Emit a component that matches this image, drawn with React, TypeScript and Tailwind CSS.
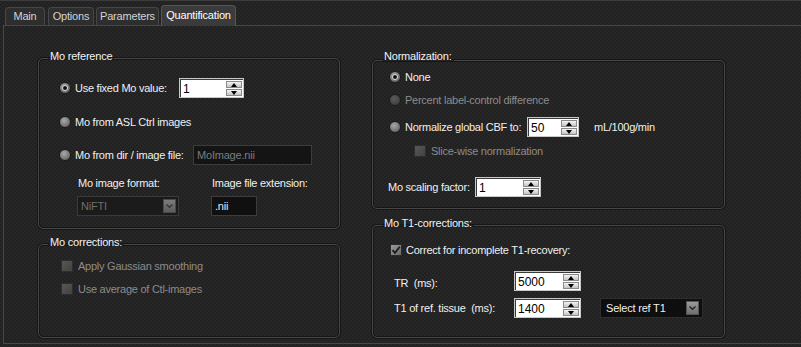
import React from "react";

const font = "font-['Liberation_Sans',Arial,sans-serif]";

function Radio({ checked = false, disabled = false }: { checked?: boolean; disabled?: boolean }) {
  return (
    <span
      className={
        "relative flex h-[12px] w-[12px] shrink-0 items-center justify-center rounded-full border border-[#1c1c1c] " +
        (disabled
          ? "bg-[radial-gradient(circle_at_40%_35%,#5a5a5a,#383838)]"
          : "bg-[radial-gradient(circle_at_40%_35%,#a8a8a8,#555555)]")
      }
    >
      {checked && (
        <span className="h-[6px] w-[6px] rounded-full border border-[#e0e0e0] bg-[#111111]" />
      )}
    </span>
  );
}

function Check({ checked = false, disabled = false }: { checked?: boolean; disabled?: boolean }) {
  return (
    <span
      className={
        "flex h-[12px] w-[12px] shrink-0 items-center justify-center border " +
        (disabled
          ? "border-[#2e2e2e] bg-[linear-gradient(135deg,#575757,#424242)]"
          : "border-[#2a2a2a] bg-[linear-gradient(135deg,#9a9a9a,#6a6a6a)]")
      }
    >
      {checked && (
        <svg width="10" height="10" viewBox="0 0 10 10">
          <path d="M1.5 5.2 L4 7.8 L8.8 1.8" fill="none" stroke="#1a1a1a" strokeWidth="1.8" />
        </svg>
      )}
    </span>
  );
}

function Spin({ value, className }: { value: string; className: string }) {
  return (
    <div className={"flex h-[20px] shrink-0 border border-[#c8c8c8] bg-white " + className}>
      <div className="flex flex-1 items-center border-l border-t border-[#3a3a3a] pl-[2px] text-[12px] leading-none text-black">
        {value}
      </div>
      <div className="flex w-[17px] flex-col border-t border-[#3a3a3a] bg-white py-[1px] pr-[1px]">
        <div className="flex h-[8px] items-center justify-center border border-[#8a8a8a] bg-[linear-gradient(#f4f4f4,#c4c4c4)]">
          <svg width="6" height="4" viewBox="0 0 6 4">
            <polygon points="3,0 6,4 0,4" fill="#000" />
          </svg>
        </div>
        <div className="mt-[1px] flex h-[8px] items-center justify-center border border-[#8a8a8a] bg-[linear-gradient(#f4f4f4,#c4c4c4)]">
          <svg width="6" height="4" viewBox="0 0 6 4">
            <polygon points="0,0 6,0 3,4" fill="#000" />
          </svg>
        </div>
      </div>
    </div>
  );
}

function DropBtn({ light = false }: { light?: boolean }) {
  return (
    <span
      className={
        "flex h-[14px] w-[13px] items-center justify-center border " +
        (light ? "border-[#555] bg-[linear-gradient(#9a9a9a,#6e6e6e)]" : "border-[#4a4a4a] bg-[linear-gradient(#7c7c7c,#5c5c5c)]")
      }
    >
      <svg width="7" height="4" viewBox="0 0 7 4">
        <path d="M0.5 0.5 L3.5 3.3 L6.5 0.5" fill="none" stroke={light ? "#222" : "#333"} strokeWidth="1.3" />
      </svg>
    </span>
  );
}

function Group({
  title,
  className,
  legendClass = "pb-[4px]",
  children,
}: {
  title: string;
  className: string;
  legendClass?: string;
  children: React.ReactNode;
}) {
  return (
    <fieldset
      className={"flex flex-col rounded-[5px] border border-[#464646] shadow-[0_0_0_1px_#161616,inset_0_0_0_1px_#161616] " + className}
    >
      <legend className={"ml-[9px] px-[2px] text-[11px] leading-[14px] tracking-[-0.2px] text-[#f2f2f2] " + legendClass}>
        {title}
      </legend>
      {children}
    </fieldset>
  );
}

export default function App() {
  const label = "text-[11px] leading-[14px] tracking-[-0.25px] text-[#f0f0f0] whitespace-nowrap";
  const dis = "text-[11px] leading-[14px] tracking-[-0.25px] text-[#8c8c8c] whitespace-nowrap";
  return (
    <div
      className={
        "h-[347px] w-[801px] overflow-hidden bg-[#242424] bg-[repeating-conic-gradient(#272727_0_25%,#212121_0_50%)] bg-[length:4px_4px] " +
        font
      }
    >
      {/* tabs */}
      <div className="relative z-10 flex h-[25px] items-end border-t border-[#3c3c3c] pl-[5px] text-[11px] tracking-[-0.2px]">
        <div className="mr-[3px] flex h-[18px] w-[40px] items-center justify-center rounded-t-[4px] border border-b-0 border-[#474747] bg-[#2e2e2e] text-[#d4d4d4]">
          Main
        </div>
        <div className="mr-[2px] flex h-[18px] w-[46px] items-center justify-center rounded-t-[4px] border border-b-0 border-[#474747] bg-[#2e2e2e] text-[#d4d4d4]">
          Options
        </div>
        <div className="mr-[2px] flex h-[18px] w-[63px] items-center justify-center rounded-t-[4px] border border-b-0 border-[#474747] bg-[#2e2e2e] text-[#d4d4d4]">
          Parameters
        </div>
        <div className="-mb-[1px] flex h-[21px] w-[75px] items-center justify-center rounded-t-[4px] border border-b-0 border-[#555555] bg-[#3b3b3b] pb-[1px] text-white">
          Quantification
        </div>
      </div>

      {/* panel */}
      <div className="ml-[3px] flex h-[319px] gap-[32px] border-b border-l border-t border-[#474747] pl-[34px] pt-[23px]">
        {/* left column */}
        <div className="flex w-[302px] flex-col">
          <Group title="Mo reference" className="h-[180px]">
            <div className="mt-[11px] flex h-[20px] items-center pl-[20px]">
              <Radio checked />
              <span className={"ml-[4px] w-[104px] " + label}>Use fixed Mo value:</span>
              <Spin value="1" className="w-[65px]" />
            </div>
            <div className="mt-[14px] flex h-[20px] items-center pl-[20px]">
              <Radio />
              <span className={"ml-[4px] " + label}>Mo from ASL Ctrl images</span>
            </div>
            <div className="mt-[13px] flex h-[20px] items-center pl-[20px]">
              <Radio />
              <span className={"ml-[4px] w-[118px] " + label}>Mo from dir / image file:</span>
              <div className="flex h-[20px] w-[119px] items-center border border-[#3c3c3c] bg-[#141414] pl-[3px] text-[11px] tracking-[-0.2px] text-[#7c7c7c]">
                MoImage.nii
              </div>
            </div>
            <div className="mt-[11px] grid grid-cols-[134px_1fr] pl-[38px]">
              <span className={"ml-[1px] " + label}>Mo image format:</span>
              <span className={"ml-[1px] " + label}>Image file extension:</span>
            </div>
            <div className="mt-[6px] grid grid-cols-[134px_1fr] pl-[38px]">
              <div className="flex h-[20px] w-[102px] items-center justify-between border border-[#3a3a3a] bg-[#1b1b1b] pl-[3px] pr-[2px] text-[11px] tracking-[-0.2px] text-[#6e6e6e]">
                NiFTI
                <DropBtn />
              </div>
              <div className="flex h-[20px] w-[46px] items-center border border-[#3c3c3c] bg-[#101010] pl-[3px] text-[11px] tracking-[-0.2px] text-[#e8e8e8]">
                .nii
              </div>
            </div>
          </Group>

          <Group title="Mo corrections:" className="mt-[6px] h-[103px]">
            <div className="mt-[6px] flex h-[14px] items-center pl-[22px]">
              <Check disabled />
              <span className={"ml-[5px] " + dis}>Apply Gaussian smoothing</span>
            </div>
            <div className="mt-[9px] flex h-[14px] items-center pl-[22px]">
              <Check disabled />
              <span className={"ml-[5px] " + dis}>Use average of Ctl-images</span>
            </div>
          </Group>
        </div>

        {/* right column */}
        <div className="flex w-[353px] flex-col">
          <Group title="Normalization:" className="h-[160px]" legendClass="pb-[8px]">
            <div className="-mt-[4px] flex h-[20px] items-center pl-[16px]">
              <Radio checked />
              <span className={"ml-[4px] " + label}>None</span>
            </div>
            <div className="mt-[3px] flex h-[20px] items-center pl-[16px]">
              <Radio disabled />
              <span className={"ml-[4px] " + dis}>Percent label-control difference</span>
            </div>
            <div className="mt-[7px] flex h-[20px] items-center pl-[16px]">
              <Radio />
              <span className={"ml-[4px] w-[122px] " + label}>Normalize global CBF to:</span>
              <Spin value="50" className="w-[52px]" />
              <span className={"ml-[15px] " + label}>mL/100g/min</span>
            </div>
            <div className="mt-[7px] flex h-[14px] items-center pl-[41px]">
              <Check disabled />
              <span className={"ml-[5px] " + dis}>Slice-wise normalization</span>
            </div>
            <div className="mt-[19px] flex h-[20px] items-center pl-[15px]">
              <span className={"w-[87px] " + label}>Mo scaling factor:</span>
              <Spin value="1" className="w-[66px]" />
            </div>
          </Group>

          <Group title="Mo T1-corrections:" className="mt-[7px] h-[122px]">
            <div className="mt-[9px] flex h-[14px] items-center pl-[17px]">
              <Check checked />
              <span className={"ml-[4px] " + label}>Correct for incomplete T1-recovery:</span>
            </div>
            <div className="mt-[14px] flex h-[20px] items-center pl-[21px]">
              <span className={"w-[120px] pt-[4px] " + label}>TR&nbsp; (ms):</span>
              <Spin value="5000" className="w-[67px]" />
            </div>
            <div className="mt-[7px] flex h-[20px] items-center pl-[21px]">
              <span className={"w-[120px] " + label}>T1 of ref. tissue&nbsp; (ms):</span>
              <Spin value="1400" className="w-[67px]" />
              <div className="ml-[19px] flex h-[20px] w-[103px] items-center justify-between border border-[#2e2e2e] bg-[#0e0e0e] pl-[5px] pr-[3px] text-[11px] tracking-[-0.2px] text-[#f0f0f0]">
                Select ref T1
                <DropBtn light />
              </div>
            </div>
          </Group>
        </div>
      </div>
    </div>
  );
}
